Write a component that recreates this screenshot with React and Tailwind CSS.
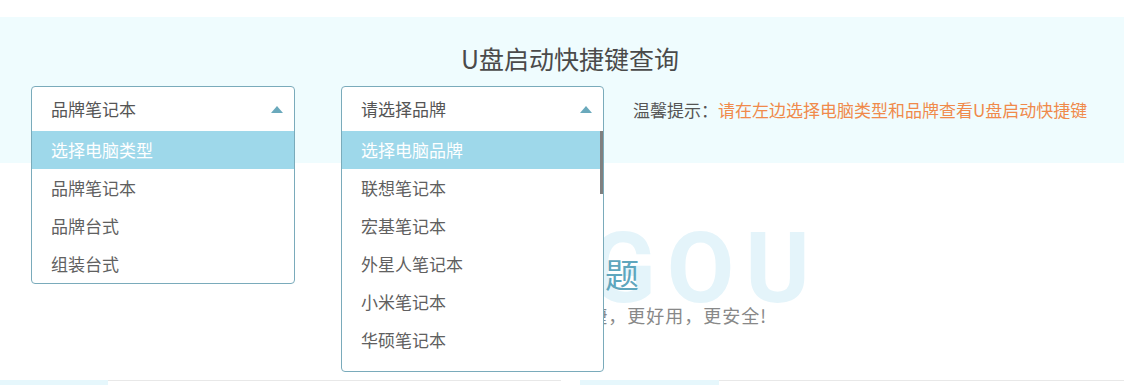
import React from 'react';

const cjk = { fontFamily: '"Noto Sans CJK SC", "Noto Sans", sans-serif' };

const typeOptions = ['选择电脑类型', '品牌笔记本', '品牌台式', '组装台式'];
const brandOptions = [
  '选择电脑品牌', '联想笔记本', '宏基笔记本', '外星人笔记本', '小米笔记本', '华硕笔记本',
  '惠普笔记本', '戴尔笔记本', '神舟笔记本', '东芝笔记本', '三星笔记本', '索尼笔记本',
  '方正笔记本', '清华同方笔记本', '微星笔记本', '技嘉笔记本', '苹果笔记本', '雷神笔记本',
  '机械革命笔记本', '华为笔记本', '荣耀笔记本', '海尔笔记本', '中柏笔记本', '其他笔记本',
];

// Opened select: header stays in flow, the whole box (header + list) overlays the page
const OpenSelect = ({ value, options, width, listHeight, scrollbar }) => (
  <div className="relative h-[45px] shrink-0" style={{ width }}>
    <div className="absolute left-0 top-0 z-20 w-full rounded-[4px] border border-[#7aabbb] bg-white">
      <div className="flex h-[44px] items-center justify-between pl-[19px] pr-[11px]">
        <span className="text-[17px] text-[#555]">{value}</span>
        <span className="h-0 w-0 border-x-[6px] border-b-[7px] border-x-transparent border-b-[#6aa9bc]" />
      </div>
      {scrollbar ? (
        <div className="relative pb-[12px] pr-[3px]">
          <div className="overflow-hidden" style={{ height: listHeight }}>
            {options.map((o, i) => (
              <div
                key={o}
                className={
                  i === 0
                    ? 'flex h-[38px] items-center bg-[#9ed8ea] pl-[19px] text-[17px] text-white'
                    : 'flex h-[38px] items-center pl-[19px] text-[17px] text-[#606060]'
                }
              >
                {o}
              </div>
            ))}
          </div>
          <div className="absolute right-0 top-0 h-[63px] w-[3px] bg-[#808080]" />
        </div>
      ) : (
        <div>
          {options.map((o, i) => (
            <div
              key={o}
              className={
                i === 0
                  ? 'flex h-[38px] items-center bg-[#9ed8ea] pl-[19px] text-[17px] text-white'
                  : 'flex h-[38px] items-center pl-[19px] text-[17px] text-[#606060]'
              }
            >
              {o}
            </div>
          ))}
        </div>
      )}
    </div>
  </div>
);

export default function App() {
  return (
    <div className="min-h-screen bg-white" style={cjk}>
      <div className="h-[17px] bg-white" />

      {/* Query panel */}
      <section className="bg-[#effcfe] pb-[32px] pt-[24px]">
        <h1 className="pl-[16px] text-center text-[25px] font-normal leading-[34px] text-[#4a4a4a]">
          U盘启动快捷键查询
        </h1>
        <div className="mt-[11px] flex items-start pl-[31px]">
          <OpenSelect value="品牌笔记本" options={typeOptions} width={264} />
          <div className="w-[46px] shrink-0" />
          <OpenSelect value="请选择品牌" options={brandOptions} width={263} listHeight={228} scrollbar />
          <p className="ml-[29px] flex h-[45px] items-center pt-[2px] text-[17px] text-[#555]">
            温馨提示：<span className="text-[#f08a4b]">请在左边选择电脑类型和品牌查看U盘启动快捷键</span>
          </p>
        </div>
      </section>

      {/* Content below, mostly covered by the open lists */}
      <section className="relative">
        <div
          className="pointer-events-none absolute left-[589px] top-[57px] select-none text-[98px] font-bold leading-none tracking-[11px] text-[#e4f4fa]"
          style={{ fontFamily: 'Roboto, sans-serif' }}
        >
          GOU
        </div>
        <div className="relative pt-[91px]">
          <h2 className="ml-[360px] w-[279px] text-right text-[34px] font-normal leading-[40px] text-[#5fa6bd]">
            U盘启动常见问题
          </h2>
          <p className="ml-[360px] mt-[8px] w-[407px] text-right text-[18px] leading-[26px] tracking-[1px] text-[#888]">
            专业U盘启动制作，更快捷，更好用，更安全!
          </p>
        </div>
        <div className="mt-[52px] flex h-[40px] gap-[19px]">
          <div className="flex w-[561px]">
            <div className="w-[108px] bg-[#e6f7fc]" />
            <div className="flex-1 border-t border-[#e8e8e8]" />
          </div>
          <div className="flex flex-1">
            <div className="w-[139px] bg-[#e6f7fc]" />
            <div className="flex-1 border-t border-[#e8e8e8]" />
          </div>
        </div>
      </section>
    </div>
  );
}
